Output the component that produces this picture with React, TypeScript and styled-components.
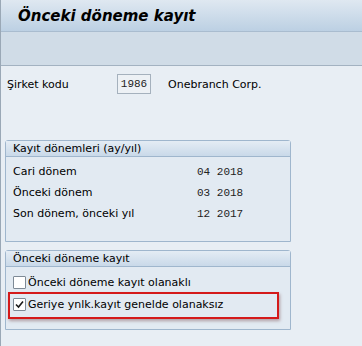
import styled, { createGlobalStyle } from "styled-components";

const Global = createGlobalStyle`
  html, body { margin: 0; padding: 0; background: #e8eef4; }
  body { font-family: Tahoma, "DejaVu Sans", sans-serif; }
`;

const Screen = styled.div`
  width: 362px;
  height: 346px;
  box-sizing: border-box;
  border-left: 1px solid #9aa8b6;
  background: #e8eef4;
  display: flex;
  flex-direction: column;
  overflow: hidden;
`;

const TitleBar = styled.div`
  height: 32px;
  box-sizing: border-box;
  border-bottom: 1px solid #a9bccf;
  background: linear-gradient(#dfe8f1, #bcd0e3);
  display: flex;
  align-items: center;
  padding-left: 17px;
`;

const Title = styled.h1`
  margin: 0;
  font-family: "DejaVu Sans", sans-serif;
  font-size: 15px;
  font-weight: bold;
  font-style: italic;
  color: #000;
`;

const Toolbar = styled.div`
  height: 34px;
  box-sizing: border-box;
  border-bottom: 1px solid #a3b2c1;
  background: #d0dce7;
`;

const Body = styled.div`
  padding: 8px 0 0 4px;
  display: flex;
  flex-direction: column;
  font-family: "DejaVu Sans", sans-serif;
  font-size: 11px;
  color: #000;
`;

const FieldRow = styled.div`
  display: flex;
  align-items: center;
  height: 20px;
  padding-left: 2px;
`;

const Label = styled.span<{ $w?: number }>`
  width: ${(p) => (p.$w ? `${p.$w}px` : "auto")};
  flex: none;
`;

const InputBox = styled.span`
  box-sizing: border-box;
  width: 34px;
  height: 20px;
  border: 1px solid #a5b1bd;
  background: #edf1f5;
  font-family: "Liberation Mono", monospace;
  font-size: 11px;
  color: #222;
  display: flex;
  align-items: center;
  justify-content: center;
  margin-right: 17px;
`;

const Group = styled.section<{ $top: number; $h: number }>`
  margin-top: ${(p) => p.$top}px;
  width: 286px;
  height: ${(p) => p.$h}px;
  box-sizing: border-box;
  border: 1px solid #9fb6cd;
  border-radius: 3px 3px 0 0;
  background: #e2eaf2;
`;

const GroupHead = styled.div`
  height: 16px;
  box-sizing: border-box;
  border-bottom: 1px solid #9fb6cd;
  background: linear-gradient(#e4ecf4, #c9d9e9);
  padding-left: 7px;
  line-height: 15px;
`;

const GroupBody = styled.div`
  padding: 4px 0 0 7px;
  display: flex;
  flex-direction: column;
`;

const PeriodRow = styled.div`
  height: 21px;
  display: flex;
  align-items: center;
`;

const Mono = styled.span`
  font-family: "Liberation Mono", monospace;
  font-size: 11px;
  color: #222;
  white-space: pre;
`;

const CheckRow = styled.div`
  position: relative;
  height: 22px;
  display: flex;
  align-items: center;
  gap: 2px;
`;

const Box = styled.span`
  box-sizing: border-box;
  width: 13px;
  height: 13px;
  border: 1px solid #7e8a96;
  background: #fff;
  display: flex;
  align-items: center;
  justify-content: center;
  border-radius: 1px;
`;

const Highlight = styled.span`
  position: absolute;
  left: -5px;
  top: -1px;
  width: 271px;
  height: 27px;
  box-sizing: border-box;
  border: 2px solid #d41a1a;
  box-shadow: 1px 2px 3px rgba(90, 20, 20, 0.35);
  pointer-events: none;
`;

function Check({ on }: { on?: boolean }) {
  return (
    <Box>
      {on && (
        <svg width="9" height="9" viewBox="0 0 9 9">
          <path d="M1 4.5 L3.5 7 L8 1.5" fill="none" stroke="#1a1a1a" strokeWidth="1.6" />
        </svg>
      )}
    </Box>
  );
}

const periods = [
  ["Cari dönem", "04 2018"],
  ["Önceki dönem", "03 2018"],
  ["Son dönem, önceki yıl", "12 2017"],
];

export default function App() {
  return (
    <Screen>
      <Global />
      <TitleBar>
        <Title>Önceki döneme kayıt</Title>
      </TitleBar>
      <Toolbar />
      <Body>
        <FieldRow>
          <Label $w={110}>Şirket kodu</Label>
          <InputBox>1986</InputBox>
          <Label>Onebranch Corp.</Label>
        </FieldRow>
        <Group $top={46} $h={102}>
          <GroupHead>Kayıt dönemleri (ay/yıl)</GroupHead>
          <GroupBody>
            {periods.map(([l, v]) => (
              <PeriodRow key={l}>
                <Label $w={184}>{l}</Label>
                <Mono>{v}</Mono>
              </PeriodRow>
            ))}
          </GroupBody>
        </Group>
        <Group $top={8} $h={80}>
          <GroupHead>Önceki döneme kayıt</GroupHead>
          <GroupBody>
            <CheckRow>
              <Check />
              <span>Önceki döneme kayıt olanaklı</span>
            </CheckRow>
            <CheckRow>
              <Check on />
              <span>Geriye ynlk.kayıt genelde olanaksız</span>
              <Highlight />
            </CheckRow>
          </GroupBody>
        </Group>
      </Body>
    </Screen>
  );
}
